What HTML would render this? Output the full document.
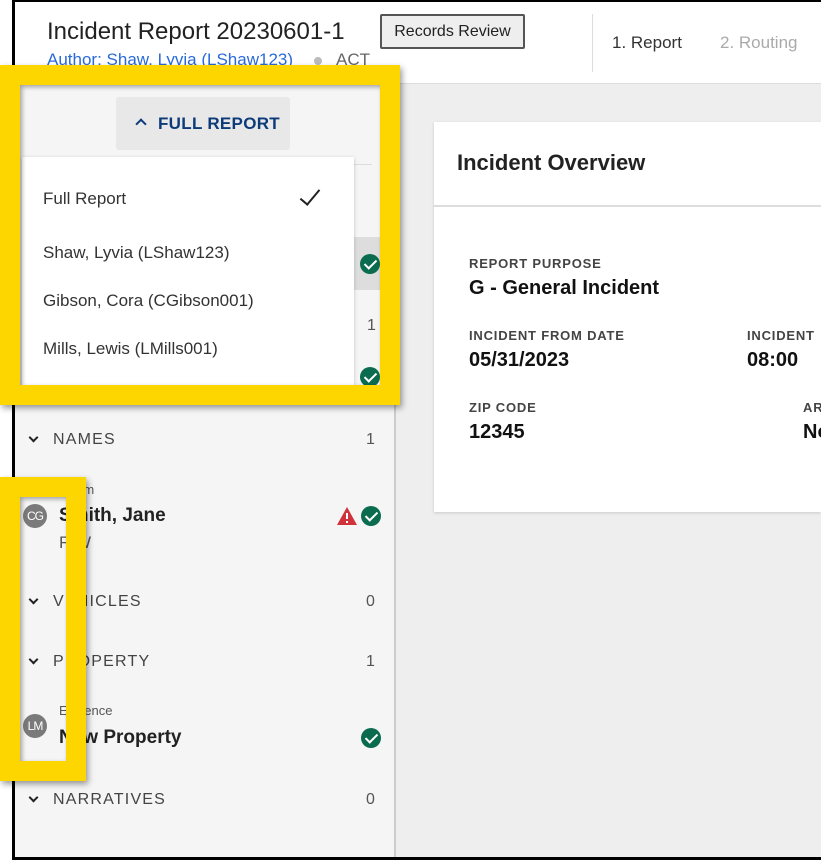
<!DOCTYPE html>
<html><head><style>
*{box-sizing:border-box;margin:0;padding:0}
body{width:821px;height:860px;overflow:hidden;background:#fff;font-family:"Liberation Sans",Arial,sans-serif;position:relative}
.a{position:absolute}
.frame{position:absolute;left:12px;top:0;width:809px;height:860px;border-left:3px solid #000;border-top:2px solid #000;border-bottom:3px solid #000;background:#eee}
.hdr{position:absolute;left:15px;top:2px;width:806px;height:82px;background:#fff;border-bottom:1px solid #ddd}
.side{position:absolute;left:15px;top:84px;width:381px;height:773px;background:#f5f5f5;border-right:2px solid #ccc}
.sec{position:absolute;left:53px;font-size:16px;letter-spacing:1.2px;color:#444}
.cnt{position:absolute;left:366px;font-size:16px;color:#555}
.chev{position:absolute;left:30px;width:7px;height:7px;border-right:2px solid #222;border-bottom:2px solid #222;transform:rotate(45deg)}
.ok{position:absolute;width:20px;height:20px;border-radius:50%;background:#0b6b4e}
.ok:after{content:"";position:absolute;left:7px;top:3px;width:5px;height:10px;border-right:2.5px solid #fff;border-bottom:2.5px solid #fff;transform:rotate(45deg)}
.av{position:absolute;left:23px;width:24px;height:24px;border-radius:50%;background:#7a7a7a;color:#fff;font-size:12px;line-height:24px;text-align:center;letter-spacing:-1px}
.lbl{position:absolute;font-size:13px;letter-spacing:.8px;color:#444;font-weight:bold}
.val{position:absolute;font-size:20px;color:#111;font-weight:bold}
.yb{position:absolute;border:20px solid #fdd600;box-shadow:2px 3px 6px rgba(0,0,0,.4),inset 2px 2px 5px rgba(0,0,0,.35)}
.mi{position:absolute;left:43px;font-size:17px;color:#333}
</style></head><body>
<div class="frame"></div>
<div class="hdr"></div>
<div class="a" style="left:47px;top:18px;font-size:24px;color:#222">Incident Report 20230601-1</div>
<div class="a" style="left:47px;top:50px;font-size:17px;color:#2a6bd8;text-decoration:underline">Author: Shaw, Lyvia (LShaw123)</div>
<div class="a" style="left:314px;top:57px;width:8px;height:8px;border-radius:50%;background:#bbb"></div>
<div class="a" style="left:336px;top:50px;font-size:17px;color:#666">ACT</div>
<div class="a" style="left:380px;top:14px;width:145px;height:35px;border:2px solid #555;border-radius:2px;background:#eee;font-size:16px;color:#222;text-align:center;line-height:31px">Records Review</div>
<div class="a" style="left:592px;top:14px;width:1px;height:58px;background:#ddd"></div>
<div class="a" style="left:612px;top:33px;font-size:17px;color:#333">1. Report</div>
<div class="a" style="left:720px;top:33px;font-size:17px;color:#aaa">2. Routing</div>

<div class="side"></div>
<div class="a" style="left:22px;top:237px;width:372px;height:53px;background:#ddd"></div>
<div class="ok" style="left:360px;top:254px"></div>
<div class="a" style="left:367px;top:317px;font-size:16px;color:#555">1</div>
<div class="ok" style="left:360px;top:367px"></div>
<div class="a" style="left:22px;top:164px;width:350px;height:1px;background:#ddd"></div>
<div class="a" style="left:116px;top:97px;width:174px;height:53px;background:#e8e8e8;border-radius:3px"></div>
<div class="a" style="left:137px;top:120px;width:8px;height:8px;border-left:2px solid #0d3b7a;border-top:2px solid #0d3b7a;transform:rotate(45deg)"></div>
<div class="a" style="left:158px;top:114px;font-size:17px;font-weight:bold;color:#0d3b7a;letter-spacing:0.3px">FULL REPORT</div>
<div class="a" style="left:22px;top:157px;width:332px;height:228px;background:#fff;box-shadow:0 1px 4px rgba(0,0,0,.2)"></div>
<div class="mi" style="top:189px">Full Report</div>
<div class="a" style="left:305px;top:185px;width:10px;height:20px;border-right:2.5px solid #222;border-bottom:2.5px solid #222;transform:rotate(40deg)"></div>
<div class="mi" style="top:243px">Shaw, Lyvia (LShaw123)</div>
<div class="mi" style="top:291px">Gibson, Cora (CGibson001)</div>
<div class="mi" style="top:339px">Mills, Lewis (LMills001)</div>

<div class="chev" style="top:434px"></div><div class="sec" style="top:431px">NAMES</div><div class="cnt" style="top:431px">1</div>
<div class="a" style="left:59px;top:482px;font-size:13px;color:#555">Victim</div>
<div class="av" style="top:504px">CG</div>
<div class="a" style="left:59px;top:505px;font-size:19px;font-weight:bold;color:#222">Smith, Jane</div>
<div class="a" style="left:59px;top:533px;font-size:17px;color:#555;letter-spacing:4px">RW</div>
<svg class="a" style="left:336px;top:506px" width="22" height="20"><path d="M11 1L21 19H1Z" fill="#d0323c"/><rect x="10" y="7" width="2" height="6" fill="#fff"/><rect x="10" y="15" width="2" height="2" fill="#fff"/></svg>
<div class="ok" style="left:361px;top:506px"></div>
<div class="chev" style="top:596px"></div><div class="sec" style="top:593px">VEHICLES</div><div class="cnt" style="top:593px">0</div>
<div class="chev" style="top:656px"></div><div class="sec" style="top:653px">PROPERTY</div><div class="cnt" style="top:653px">1</div>
<div class="a" style="left:59px;top:703px;font-size:13px;color:#555">Evidence</div>
<div class="av" style="top:714px">LM</div>
<div class="a" style="left:59px;top:727px;font-size:19px;font-weight:bold;color:#222">New Property</div>
<div class="ok" style="left:361px;top:728px"></div>
<div class="chev" style="top:794px"></div><div class="sec" style="top:791px">NARRATIVES</div><div class="cnt" style="top:791px">0</div>

<div class="a" style="left:434px;top:122px;width:387px;height:390px;background:#fff;box-shadow:0 1px 3px rgba(0,0,0,.15)"></div>
<div class="a" style="left:434px;top:205px;width:387px;height:2px;background:#ddd"></div>
<div class="a" style="left:457px;top:150px;font-size:22px;font-weight:bold;color:#222">Incident Overview</div>
<div class="lbl" style="left:469px;top:256px">REPORT PURPOSE</div>
<div class="val" style="left:469px;top:277px">G - General Incident</div>
<div class="lbl" style="left:469px;top:328px">INCIDENT FROM DATE</div>
<div class="val" style="left:469px;top:349px">05/31/2023</div>
<div class="lbl" style="left:747px;top:328px">INCIDENT</div>
<div class="val" style="left:747px;top:349px">08:00</div>
<div class="lbl" style="left:469px;top:400px">ZIP CODE</div>
<div class="val" style="left:469px;top:421px">12345</div>
<div class="lbl" style="left:803px;top:400px">AR</div>
<div class="val" style="left:803px;top:421px">No</div>

<div class="yb" style="left:0;top:65px;width:400px;height:340px"></div>
<div class="yb" style="left:0;top:477px;width:86px;height:304px"></div>
</body></html>
